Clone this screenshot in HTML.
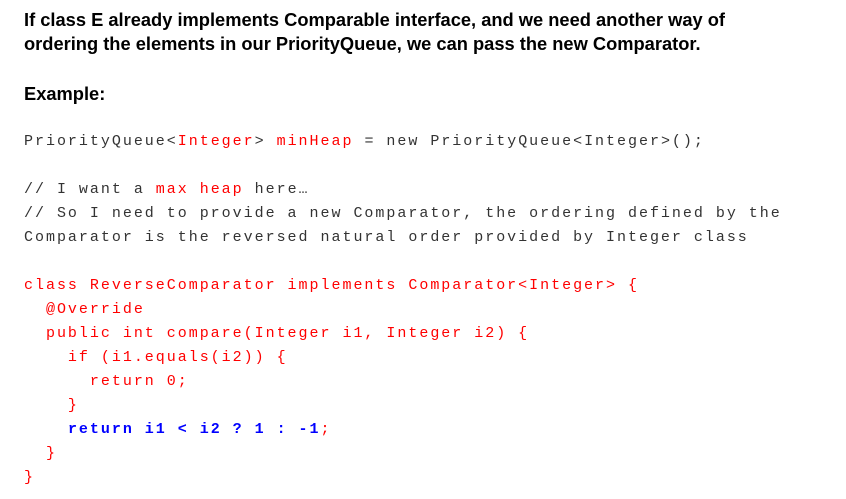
<!DOCTYPE html>
<html><head><style>
body{margin:0;background:#fff;width:846px;height:499px;overflow:hidden}
.t{position:absolute;left:24px;font:bold 18.3px "Liberation Sans",sans-serif;color:#000;line-height:24px;white-space:nowrap}
pre{position:absolute;left:24px;top:130px;margin:0;font:15px "Liberation Mono",monospace;letter-spacing:1.98px;line-height:24px;color:#333}
.r{color:#f00}.b{color:#00f;font-weight:bold}
</style></head><body>
<div class="t" style="top:8px">If class E already implements Comparable interface, and we need another way of<br>ordering the elements in our PriorityQueue, we can pass the new Comparator.</div>
<div class="t" style="top:82px">Example:</div>
<pre>PriorityQueue&lt;<span class="r">Integer</span>&gt; <span class="r">minHeap</span> = new PriorityQueue&lt;Integer&gt;();

// I want a <span class="r">max heap</span> here…
// So I need to provide a new Comparator, the ordering defined by the
Comparator is the reversed natural order provided by Integer class

<span class="r">class ReverseComparator implements Comparator&lt;Integer&gt; {
  @Override
  public int compare(Integer i1, Integer i2) {
    if (i1.equals(i2)) {
      return 0;
    }
    <span class="b">return i1 &lt; i2 ? 1 : -1</span>;
  }
}</span></pre>
</body></html>
